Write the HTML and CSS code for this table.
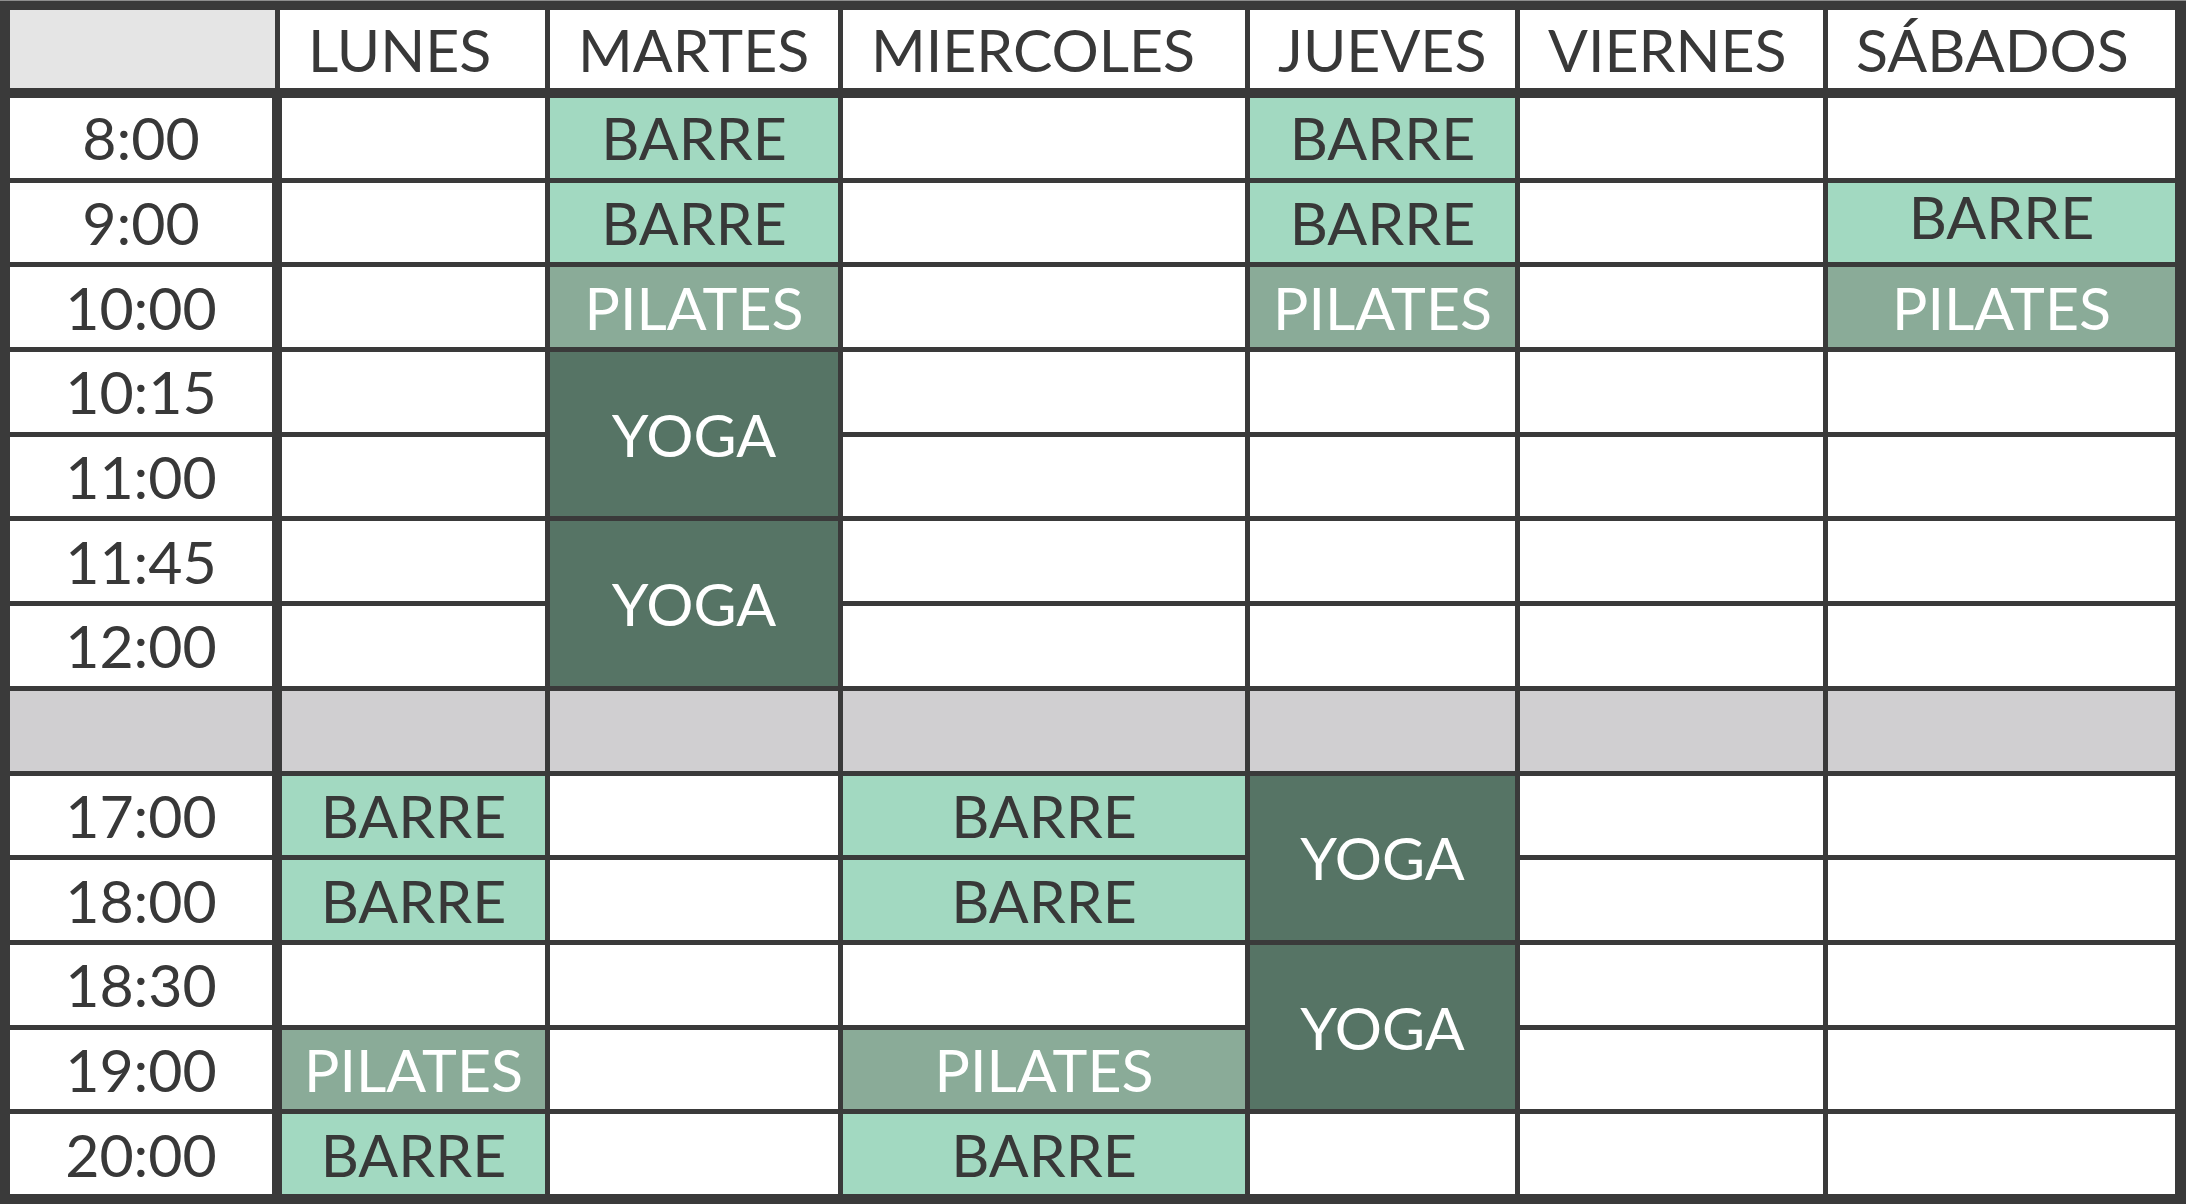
FILE: index.html
```html
<!DOCTYPE html>
<html lang="es">
<head>
<meta charset="utf-8">
<title>Horario</title>
<link rel="stylesheet" href="styles.css">
</head>
<body>
<div class="schedule">
  <div class="cell head corner"></div>
  <div class="cell head">LUNES</div>
  <div class="cell head">MARTES</div>
  <div class="cell head">MIERCOLES</div>
  <div class="cell head">JUEVES</div>
  <div class="cell head">VIERNES</div>
  <div class="cell head">SÁBADOS</div>

  <div class="cell time">8:00</div>
  <div class="cell mon"></div>
  <div class="cell barre">BARRE</div>
  <div class="cell"></div>
  <div class="cell barre">BARRE</div>
  <div class="cell"></div>
  <div class="cell"></div>

  <div class="cell time">9:00</div>
  <div class="cell mon"></div>
  <div class="cell barre">BARRE</div>
  <div class="cell"></div>
  <div class="cell barre">BARRE</div>
  <div class="cell"></div>
  <div class="cell barre up">BARRE</div>

  <div class="cell time">10:00</div>
  <div class="cell mon"></div>
  <div class="cell pilates">PILATES</div>
  <div class="cell"></div>
  <div class="cell pilates">PILATES</div>
  <div class="cell"></div>
  <div class="cell pilates">PILATES</div>

  <div class="cell time">10:15</div>
  <div class="cell mon"></div>
  <div class="cell yoga">YOGA</div>
  <div class="cell"></div>
  <div class="cell"></div>
  <div class="cell"></div>
  <div class="cell"></div>

  <div class="cell time">11:00</div>
  <div class="cell mon"></div>
  <div class="cell"></div>
  <div class="cell"></div>
  <div class="cell"></div>
  <div class="cell"></div>

  <div class="cell time">11:45</div>
  <div class="cell mon"></div>
  <div class="cell yoga">YOGA</div>
  <div class="cell"></div>
  <div class="cell"></div>
  <div class="cell"></div>
  <div class="cell"></div>

  <div class="cell time">12:00</div>
  <div class="cell mon"></div>
  <div class="cell"></div>
  <div class="cell"></div>
  <div class="cell"></div>
  <div class="cell"></div>

  <div class="cell time break"></div>
  <div class="cell mon break"></div>
  <div class="cell break"></div>
  <div class="cell break"></div>
  <div class="cell break"></div>
  <div class="cell break"></div>
  <div class="cell break"></div>

  <div class="cell time">17:00</div>
  <div class="cell mon barre">BARRE</div>
  <div class="cell"></div>
  <div class="cell barre">BARRE</div>
  <div class="cell yoga">YOGA</div>
  <div class="cell"></div>
  <div class="cell"></div>

  <div class="cell time">18:00</div>
  <div class="cell mon barre">BARRE</div>
  <div class="cell"></div>
  <div class="cell barre">BARRE</div>
  <div class="cell"></div>
  <div class="cell"></div>

  <div class="cell time">18:30</div>
  <div class="cell mon"></div>
  <div class="cell"></div>
  <div class="cell"></div>
  <div class="cell yoga">YOGA</div>
  <div class="cell"></div>
  <div class="cell"></div>

  <div class="cell time">19:00</div>
  <div class="cell mon pilates">PILATES</div>
  <div class="cell"></div>
  <div class="cell pilates">PILATES</div>
  <div class="cell"></div>
  <div class="cell"></div>

  <div class="cell time">20:00</div>
  <div class="cell mon barre">BARRE</div>
  <div class="cell"></div>
  <div class="cell barre">BARRE</div>
  <div class="cell"></div>
  <div class="cell"></div>
  <div class="cell"></div>
</div>
</body>
</html>
```

FILE: styles.css
```css
* {
  box-sizing: border-box;
}

html,
body {
  margin: 0;
  background: #ffffff;
}

.schedule {
  display: grid;
  width: 2186px;
  height: 1204px;
  padding: 9px 11px 10px 10px;
  border-top: 1px solid #8e8e8e;
  background: #3a3a3a;
  grid-template-columns: 265px 265px 288px 402px 265px 303px 347px;
  grid-template-rows: 83px repeat(13, 1fr);
  gap: 5px;
  font-family: Lato, "Noto Sans", sans-serif;
  font-weight: 400;
  font-size: 59px;
  line-height: 1;
  color: #383838;
}

.cell {
  display: flex;
  align-items: center;
  justify-content: center;
  background: #ffffff;
  white-space: nowrap;
}

.head {
  justify-content: flex-start;
  padding-left: 28px;
  border-bottom: 5px solid #3a3a3a;
}

.corner {
  background: #e5e5e5;
}

.time {
  border-right: 3px solid #3a3a3a;
}

.mon {
  border-left: 2px solid #3a3a3a;
}

.barre {
  background: #a2d9c1;
}

.pilates {
  background: #8aab98;
  color: #ffffff;
}

.yoga {
  grid-row: span 2;
  background: #567465;
  color: #ffffff;
}

.break {
  background: #d0cfd1;
}

.up {
  padding-bottom: 12px;
}
```
